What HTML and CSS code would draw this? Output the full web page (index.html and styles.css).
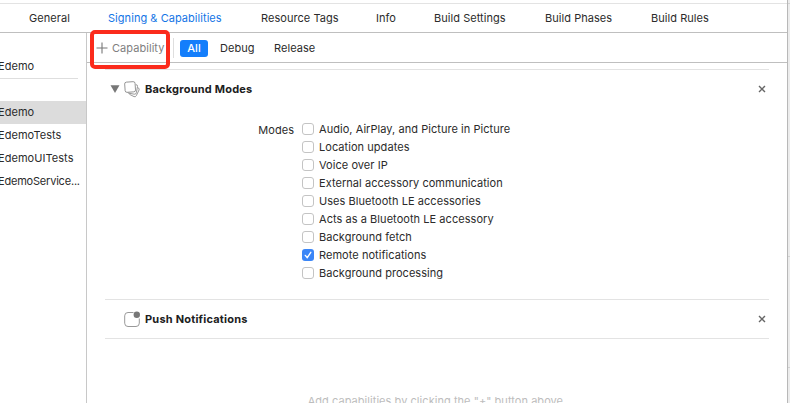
FILE: index.html
```html
<!DOCTYPE html>
<html lang="en">
<head>
<meta charset="utf-8">
<title>Signing &amp; Capabilities</title>
<link rel="stylesheet" href="styles.css">
</head>
<body>
<div class="window">
  <main class="editor">
    <nav class="tabs">
      <span>General</span><span class="active">Signing &amp; Capabilities</span><span>Resource Tags</span><span>Info</span><span>Build Settings</span><span>Build Phases</span><span>Build Rules</span>
    </nav>
    <div class="body">
      <aside class="sidebar">
        <div class="row project">Edemo</div>
        <div class="rule"></div>
        <div class="row selected">Edemo</div>
        <div class="row">EdemoTests</div>
        <div class="row">EdemoUITests</div>
        <div class="row truncated">EdemoService...</div>
      </aside>
      <section class="content">
        <div class="filter">
          <div class="add">
            <svg width="12" height="12" viewBox="0 0 12 12"><path d="M6 .5v11M.5 6h11" stroke="#777" stroke-width="1.1" fill="none"/></svg>
            <span>Capability</span>
            <div class="highlight"></div>
          </div>
          <div class="divider"></div>
          <span class="pill">All</span>
          <span class="debug">Debug</span>
          <span class="release">Release</span>
        </div>
        <div class="capabilities">
          <div class="capability modes-card">
            <header class="head">
              <svg class="arrow" width="10" height="8" viewBox="0 0 10 8"><path d="M.5.2h9L5 7.9z" fill="#777"/></svg>
              <svg class="icon" width="17" height="17" viewBox="0 0 17 17" fill="none" stroke="#8c8c8c" stroke-width=".9"><rect x=".9" y=".9" width="10.4" height="10.2" rx="1.8" transform="rotate(-4 6 6)"/><path d="M11.8 3.6q2 .2 1.7 1.8l-1.1 6.2q-.4 2-2.2 1.6L5 12.2q-1-.2-1.4-.9"/><path d="M13.6 6.6q2.2.7 1.5 2.3l-2.8 5.8q-.8 1.6-2.3.9L6 13.6q-.8-.4-1-1.2"/></svg>
              <h2>Background Modes</h2>
              <svg class="close" width="8" height="8" viewBox="0 0 8 8"><path d="M1 1l6 6M7 1L1 7" stroke="#666" stroke-width="1.4"/></svg>
            </header>
            <div class="modes">
              <span class="label">Modes</span>
              <div class="options">
                <div class="option"><i class="box"></i><span>Audio, AirPlay, and Picture in Picture</span></div>
                <div class="option"><i class="box"></i><span>Location updates</span></div>
                <div class="option"><i class="box"></i><span>Voice over IP</span></div>
                <div class="option"><i class="box"></i><span>External accessory communication</span></div>
                <div class="option"><i class="box"></i><span>Uses Bluetooth LE accessories</span></div>
                <div class="option"><i class="box"></i><span>Acts as a Bluetooth LE accessory</span></div>
                <div class="option"><i class="box"></i><span>Background fetch</span></div>
                <div class="option"><i class="box checked"><svg width="12" height="12" viewBox="0 0 12 12"><path d="M3.3 6.4l2 2.3 3.5-5.4" fill="none" stroke="#fff" stroke-width="1.4" stroke-linecap="round" stroke-linejoin="round"/></svg></i><span>Remote notifications</span></div>
                <div class="option"><i class="box"></i><span>Background processing</span></div>
              </div>
            </div>
          </div>
          <div class="capability push-card">
            <header class="head">
              <span class="arrow"></span>
              <svg class="icon" width="17" height="17" viewBox="0 0 17 17"><path d="M9.5 1.5H4Q.7 1.5.7 4.8v7.4q0 3.3 3.3 3.3h8q3.3 0 3.3-3.3V7.5" fill="none" stroke="#999"/><circle cx="12.8" cy="3.7" r="3.2" fill="#777"/></svg>
              <h2>Push Notifications</h2>
              <svg class="close" width="8" height="8" viewBox="0 0 8 8"><path d="M1 1l6 6M7 1L1 7" stroke="#666" stroke-width="1.4"/></svg>
            </header>
          </div>
          <p class="hint">Add capabilities by clicking the "+" button above.</p>
        </div>
      </section>
    </div>
  </main>
  <div class="edge"><div></div><div></div><div></div><div></div></div>
</div>
</body>
</html>
```
FILE: styles.css
```css
* { box-sizing: border-box; }
body { margin: 0; background: #fff; color: #2b2b2b; font: 11px/18px Inter, "Liberation Sans", sans-serif; letter-spacing: .05px; overflow: hidden; }
svg { display: block; flex: none; }
.window { width: 790px; height: 403px; display: flex; overflow: hidden; padding-top: 3px; }
.editor { width: 787px; display: flex; flex-direction: column; border-top: 1px solid #e3e3e3; }
.tabs { height: 29px; flex: none; display: grid; grid-template-columns: 79px 153px 115px 58px 111px 106px auto; align-items: center; padding-left: 29px; border-bottom: 1px solid #bfbfbf; white-space: nowrap; }
.tabs .active { color: #1475e6; }
.body { display: flex; flex: 1; min-height: 0; }
.sidebar { width: 87px; flex: none; border-right: 1px solid #c8c8c8; padding-top: 22px; }
.row { height: 23px; line-height: 23px; margin-left: -2px; white-space: nowrap; }
.truncated { letter-spacing: -.2px; }
.rule { width: 78px; height: 1px; background: #dedede; margin-bottom: 22px; }
.selected { background: #dcdcdc; }
.content { flex: 1; min-width: 0; }
.filter { height: 30px; display: flex; align-items: center; border-bottom: 1px solid #bfbfbf; }
.add { width: 86px; height: 29px; display: flex; align-items: center; gap: 4px; padding-left: 9px; color: #808080; position: relative; }
.highlight { position: absolute; left: 3px; top: -3px; width: 80px; height: 39px; border: 4px solid #fb2b1c; border-radius: 5px; }
.divider { width: 1px; height: 20px; background: #dedede; }
.pill { width: 28px; height: 17px; line-height: 16px; margin: 1px 0 0 6px; text-align: center; border-radius: 3px; background: #147efb; color: #fff; font-weight: 500; }
.debug { margin-left: 12px; width: 54px; }
.capabilities { padding: 6px 18px 0; }
.capability { border-top: 1px solid #e3e3e3; }
.modes-card { height: 230px; }
.push-card { height: 40px; border-bottom: 1px solid #e3e3e3; }
.head { display: flex; align-items: center; height: 38px; padding: 0 3px 0 5px; }
.arrow { width: 10px; flex: none; }
.icon { margin-left: 4px; }
h2 { margin: 0 0 0 4px; font-size: 11px; font-weight: 700; color: #202020; letter-spacing: .21px; white-space: nowrap; }
.close { margin-left: auto; }
.modes { display: flex; margin-top: 12px; }
.label { width: 189px; text-align: right; padding-top: 1px; }
.options { margin-left: 8px; }
.option { display: flex; align-items: center; height: 18px; gap: 5px; white-space: nowrap; }
.box { width: 12px; height: 12px; border: 1px solid #c4c4c4; border-radius: 3px; background: #fff; flex: none; }
.checked { border: 0; background: #3b86f7; }
.hint { margin: 53px 0 0; text-align: center; color: #bdbdbd; white-space: nowrap; }
.edge { width: 3px; margin-top: -3px; height: 403px; background: #ececec; border-left: 1px solid #b8b8b8; display: grid; grid-template-rows: 4px 253px 111px 35px; }
.edge div { border-bottom: 1px solid #d2d2d2; }
.edge div:last-child { border-bottom: 0; }
```
